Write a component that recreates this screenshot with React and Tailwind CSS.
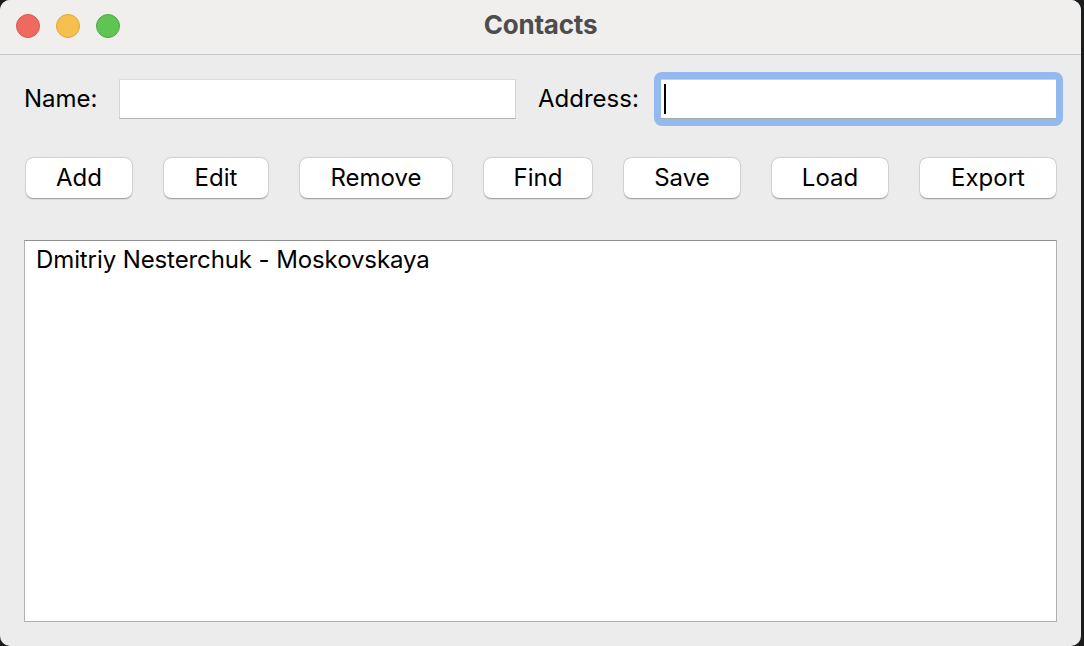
export default function App() {
  const buttons = [
    { label: "Add", w: "w-[106px]" },
    { label: "Edit", w: "w-[104px]" },
    { label: "Remove", w: "w-[152px]" },
    { label: "Find", w: "w-[108px]" },
    { label: "Save", w: "w-[116px]" },
    { label: "Load", w: "w-[116px]" },
    { label: "Export", w: "w-[136px]" },
  ];
  return (
    <div
      className="w-[1084px] h-[646px] bg-[#1c1c1c] flex text-black"
      style={{ fontFamily: "Inter, 'Noto Sans', sans-serif" }}
    >
      <div className="w-[1081px] h-full rounded-[10px] overflow-hidden bg-[#ececec] flex flex-col">
        {/* title bar */}
        <div className="h-[55px] shrink-0 bg-[#f0efee] border-b border-[#c9c9c9] grid grid-cols-[1fr_auto_1fr] items-center">
          <div className="flex items-center gap-[16px] pl-[16px] pb-[3px]">
            <span className="w-[24px] h-[24px] rounded-full bg-[#ee6a5f] border border-[#d8584e]" />
            <span className="w-[24px] h-[24px] rounded-full bg-[#f6c04f] border border-[#dea73b]" />
            <span className="w-[24px] h-[24px] rounded-full bg-[#5fc454] border border-[#4caa42]" />
          </div>
          <div className="text-[26px] leading-[32px] font-bold text-[#4d4d4d] pb-[4px] tracking-[-0.2px]">Contacts</div>
          <div />
        </div>

        {/* inputs row */}
        <div className="flex items-center pl-[24px] mt-[17px] h-[54px]">
          <span className="w-[95px] text-[24px] leading-[30px]">Name:</span>
          <div className="w-[397px] h-[40px] bg-white border-t border-[#dcdcdc] border-b border-b-[#b4b4b4] border-x border-x-[#d6d6d6]" />
          <span className="ml-[22px] w-[116px] text-[24px] leading-[30px]">Address:</span>
          <div className="w-[409px] h-[54px] rounded-[8px] bg-[#93b9ef] p-[7px]">
            <div className="w-full h-full bg-white border-t border-[#d0d0d0] border-b border-b-[#a8a8a8] flex items-center pl-[3px]">
              <span className="w-[2px] h-[30px] bg-black" />
            </div>
          </div>
        </div>

        {/* buttons */}
        <div className="flex items-center gap-[32px] pl-[26px] mt-[32px]">
          {buttons.map((b) => (
            <button
              key={b.label}
              className={`${b.w} h-[40px] bg-white rounded-[7px] text-[24px] leading-[30px] flex items-center justify-center shadow-[0_0.5px_1.5px_rgba(0,0,0,0.35),0_0_0_0.5px_rgba(0,0,0,0.08)]`}
            >
              {b.label}
            </button>
          ))}
        </div>

        {/* list */}
        <div className="ml-[24px] mt-[42px] w-[1033px] h-[382px] bg-white border border-[#b0b0b0] border-t-[#909090] pl-[11px] pt-[4px]">
          <div className="text-[24px] leading-[30px] tracking-[-0.1px]">Dmitriy Nesterchuk - Moskovskaya</div>
        </div>
      </div>
    </div>
  );
}
